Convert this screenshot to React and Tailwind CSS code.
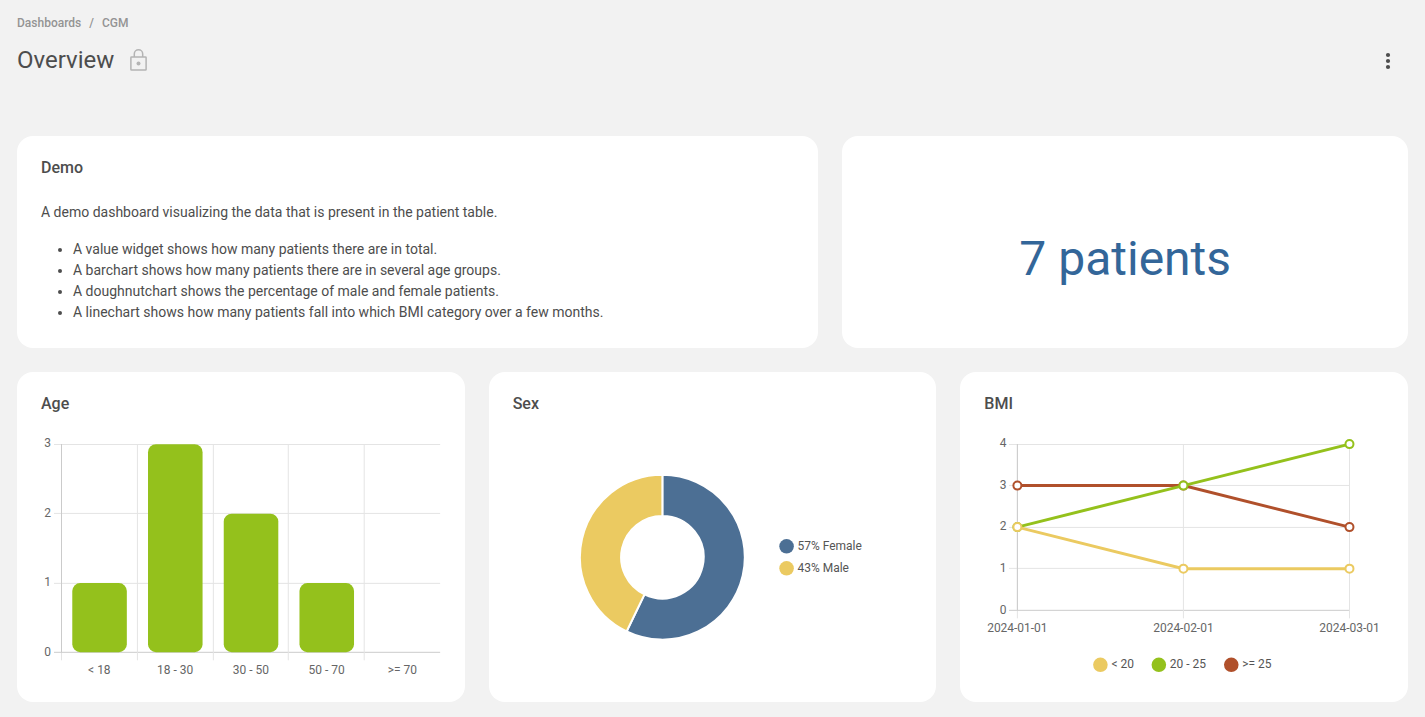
const ageGroups = [
  { label: '< 18', value: 1 },
  { label: '18 - 30', value: 3 },
  { label: '30 - 50', value: 2 },
  { label: '50 - 70', value: 1 },
  { label: '>= 70', value: 0 },
];

const sexes = [
  { label: '57% Female', value: 4, color: '#4c6f94' },
  { label: '43% Male', value: 3, color: '#ebca61' },
];

const months = ['2024-01-01', '2024-02-01', '2024-03-01'];

const bmiSeries = [
  { label: '< 20', values: [2, 1, 1], color: '#ebca61', legendX: 116.5 },
  { label: '20 - 25', values: [2, 3, 4], color: '#94c11c', legendX: 175 },
  { label: '>= 25', values: [3, 3, 2], color: '#b0502b', legendX: 247.5 },
];

const demoItems = [
  'A value widget shows how many patients there are in total.',
  'A barchart shows how many patients there are in several age groups.',
  'A doughnutchart shows the percentage of male and female patients.',
  'A linechart shows how many patients fall into which BMI category over a few months.',
];

const GRID = '#e4e4e4';
const AXIS = '#cbcbcb';

function Card({ title, className = '', children }) {
  return (
    <section className={`flex flex-col rounded-2xl bg-white p-6 ${className}`}>
      {title ? <h2 className="h-4 text-base leading-4 font-medium">{title}</h2> : <div className="h-4" />}
      {children}
    </section>
  );
}

function Chart({ label, children }) {
  return (
    <svg viewBox="0 0 400 242" role="img" aria-label={label} className="mt-6 w-full text-xs">
      {children}
    </svg>
  );
}

function LegendItem({ x, y, color, label }) {
  return (
    <g>
      <circle cx={x} cy={y} r="7.3" fill={color} />
      <text x={x + 11} y={y + 3.6} fill="#555">{label}</text>
    </g>
  );
}

function BarChart() {
  const left = 20.5;
  const bottom = 216.5;
  const step = 75.8;
  const unit = 69.5;

  return (
    <Chart label="Patients per age group">
      {[0, 1, 2, 3].map((tick) => {
        const rawY = bottom - tick * unit;
        const y = Math.floor(rawY) + 0.5;
        return (
          <g key={tick}>
            <line x1="13" x2="399.5" y1={y} y2={y} stroke={tick === 0 ? AXIS : GRID} />
            <text x="10" y={Math.floor(rawY + 3.7)} textAnchor="end" fill="#666">{tick}</text>
          </g>
        );
      })}
      {ageGroups.map((group, i) => {
        const x = Math.floor(left + i * step) + 0.5;
        return (
          <g key={group.label}>
            <line x1={x} x2={x} y1="8" y2="224.5" stroke={GRID} />
            <text x={left + (i + 0.5) * step} y="238" textAnchor="middle" fill="#666">{group.label}</text>
          </g>
        );
      })}
      <line x1={left} x2={left} y1="8" y2="217" stroke={AXIS} />
      {ageGroups.filter((g) => g.value > 0).map((group, i) => (
        <rect
          key={group.label}
          x={left + i * step + 10.8}
          y={bottom - group.value * unit + 0.2}
          width="54.6"
          height={group.value * unit - 0.3}
          rx="8"
          fill="#94c11c"
        />
      ))}
    </Chart>
  );
}

function DoughnutChart() {
  const cx = 149.5;
  const cy = 121.3;
  const outer = 82.5;
  const inner = 41.3;
  const total = sexes.reduce((sum, s) => sum + s.value, 0);
  const point = (radius, share) => {
    const angle = share * 2 * Math.PI;
    return `${cx + radius * Math.sin(angle)} ${cy - radius * Math.cos(angle)}`;
  };

  let start = 0;
  const slices = sexes.map((s) => {
    const end = start + s.value / total;
    const large = end - start > 0.5 ? 1 : 0;
    const d = `M${point(outer, start)}A${outer} ${outer} 0 ${large} 1 ${point(outer, end)}L${point(inner, end)}A${inner} ${inner} 0 ${large} 0 ${point(inner, start)}Z`;
    start = end;
    return { ...s, d };
  });

  return (
    <Chart label="Patients by sex">
      {slices.map((s) => (
        <path key={s.label} d={s.d} fill={s.color} stroke="#fff" strokeWidth="2" />
      ))}
      {sexes.map((s, i) => (
        <LegendItem key={s.label} x={273.8} y={110.4 + i * 22} color={s.color} label={s.label} />
      ))}
    </Chart>
  );
}

function LineChart() {
  const px = (i) => 33.4 + i * 166.2;
  const py = (value) => 174.3 - value * 41.55;

  return (
    <Chart label="Patients per BMI category">
      {[0, 1, 2, 3, 4].map((tick) => {
        const y = Math.floor(py(tick)) + 0.5;
        return (
          <g key={tick}>
            <line x1="25" x2="366" y1={y} y2={y} stroke={tick === 0 ? AXIS : GRID} />
            <text x="22.4" y={Math.floor(py(tick) + 3.7)} textAnchor="end" fill="#666">{tick}</text>
          </g>
        );
      })}
      {months.map((month, i) => (
        <g key={month}>
          <line x1={px(i)} x2={px(i)} y1="8" y2="182.5" stroke={GRID} />
          <text x={px(i)} y="196" textAnchor="middle" fill="#666">{month}</text>
        </g>
      ))}
      <line x1={px(0)} x2={px(0)} y1="8" y2="175" stroke={AXIS} />
      {[...bmiSeries].reverse().map((series) => (
        <g key={series.label} stroke={series.color}>
          <polyline
            points={series.values.map((v, i) => `${px(i)},${py(v)}`).join(' ')}
            fill="none"
            strokeWidth="3"
          />
          {series.values.map((v, i) => (
            <circle key={i} cx={px(i)} cy={py(v)} r="4" fill="#fff" strokeWidth="2" />
          ))}
        </g>
      ))}
      {bmiSeries.map((series) => (
        <LegendItem key={series.label} x={series.legendX} y={229} color={series.color} label={series.label} />
      ))}
    </Chart>
  );
}

function LockIcon() {
  return (
    <svg viewBox="0 0 18 24" className="h-6 w-[18px]" fill="none" stroke="#b4b4b4" strokeWidth="1.5" aria-hidden="true">
      <rect x="0.9" y="9" width="15.2" height="13" rx="0.6" />
      <path d="M4.3 9V6a4.2 4.2 0 0 1 8.4 0V9" />
      <circle cx="8.5" cy="15.5" r="2" fill="#b4b4b4" stroke="none" />
    </svg>
  );
}

export default function App() {
  return (
    <div className="min-h-screen bg-[#f2f2f2] px-[17px] pt-[15px] pb-[15px] font-[Roboto,sans-serif] text-[#4d4d4d]">
      <header>
        <nav aria-label="Breadcrumb" className="flex gap-2 text-xs font-medium text-[#949494]">
          <a href="#dashboards">Dashboards</a>
          <span>/</span>
          <a href="#cgm">CGM</a>
        </nav>
        <div className="mt-[13px] flex h-8 items-center">
          <h1 className="text-2xl">Overview</h1>
          <span className="ml-4">
            <LockIcon />
          </span>
          <button type="button" aria-label="More options" className="mr-2 ml-auto flex size-6 items-center justify-center">
            <svg viewBox="0 0 24 24" className="size-6" fill="#4d4d4d" aria-hidden="true">
              <circle cx="12" cy="7" r="2.1" />
              <circle cx="12" cy="13" r="2.1" />
              <circle cx="12" cy="19" r="2.1" />
            </svg>
          </button>
        </div>
      </header>

      <main className="mt-[60px] grid grid-cols-12 gap-6">
        <Card title="Demo" className="col-span-7 min-h-[212px]">
          <div className="mt-[26px] text-sm leading-[21px]">
            <p>A demo dashboard visualizing the data that is present in the patient table.</p>
            <ul className="mt-4 list-disc pl-8">
              {demoItems.map((item) => (
                <li key={item}>{item}</li>
              ))}
            </ul>
          </div>
        </Card>
        <Card className="col-span-5">
          <div className="mt-6 flex flex-1 items-center justify-center pb-1.5">
            <p className="text-5xl text-[#336699]">7 patients</p>
          </div>
        </Card>
        <Card title="Age" className="col-span-4">
          <BarChart />
        </Card>
        <Card title="Sex" className="col-span-4">
          <DoughnutChart />
        </Card>
        <Card title="BMI" className="col-span-4">
          <LineChart />
        </Card>
      </main>
    </div>
  );
}
